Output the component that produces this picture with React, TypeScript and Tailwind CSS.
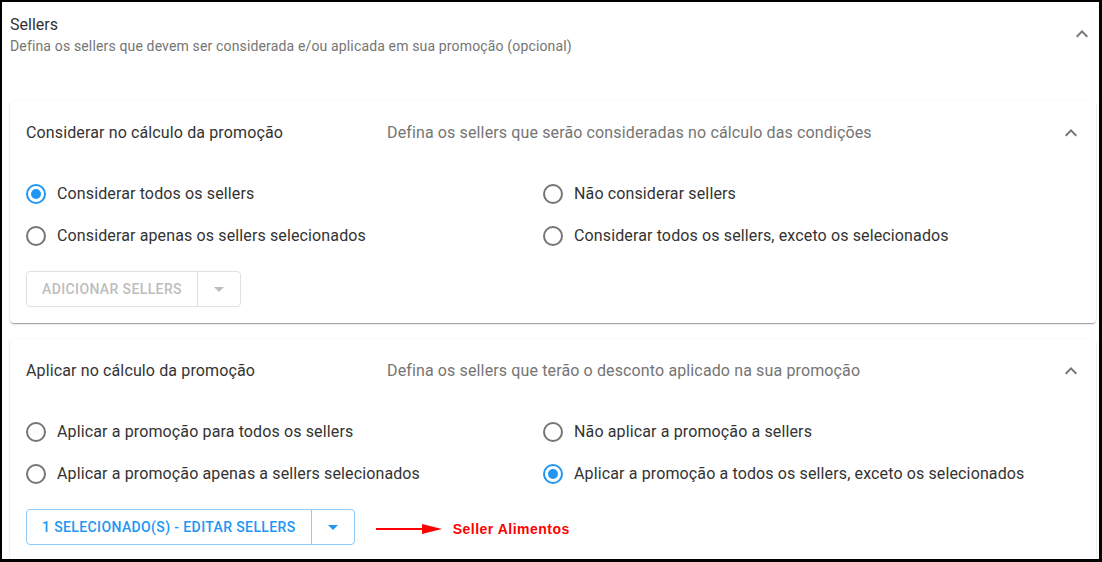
import React from "react";

const FONT = { fontFamily: "Roboto, 'Noto Sans', sans-serif" };

function ExpandLess({ className = "" }: { className?: string }) {
  return (
    <svg viewBox="0 0 24 24" className={className} fill="currentColor">
      <path d="M12 8l-6 6 1.41 1.41L12 10.83l4.59 4.58L18 14z" />
    </svg>
  );
}

function ArrowDropDown({ className = "" }: { className?: string }) {
  return (
    <svg viewBox="0 0 24 24" className={className} fill="currentColor">
      <path d="M7 10l5 5 5-5z" />
    </svg>
  );
}

function Radio({ checked, label }: { checked?: boolean; label: string }) {
  return (
    <label className="flex h-[42px] items-center gap-[11px]">
      <span
        className={
          "flex h-[20px] w-[20px] items-center justify-center rounded-full border-2 " +
          (checked ? "border-[#2196f3]" : "border-[#757575]")
        }
      >
        {checked && <span className="h-[10px] w-[10px] rounded-full bg-[#2196f3]" />}
      </span>
      <span className="text-[16px] tracking-[0.13px] text-[#333333]">{label}</span>
    </label>
  );
}

function SplitButton({ label, active }: { label: string; active?: boolean }) {
  const border = active ? "border-[#90caf9]" : "border-[#e0e0e0]";
  const text = active ? "text-[#2196f3]" : "text-[#bdbdbd]";
  return (
    <div className={`inline-flex h-[36px] rounded-[4px] border ${border}`}>
      <span
        className={`flex items-center px-[15px] text-[14px] font-medium uppercase tracking-[0.38px] ${text}`}
      >
        {label}
      </span>
      <span className={`flex w-[43px] items-center justify-center border-l ${border} ${text}`}>
        <ArrowDropDown className="h-[24px] w-[24px]" />
      </span>
    </div>
  );
}

function Panel({
  title,
  hint,
  options,
  button,
}: {
  title: string;
  hint: string;
  options: Array<{ label: string; checked?: boolean }>;
  button: React.ReactNode;
}) {
  return (
    <section className="rounded-[4px] bg-white px-[16px] pb-[16px] shadow-[0px_2px_1px_-1px_rgba(0,0,0,0.2),0px_1px_1px_0px_rgba(0,0,0,0.14),0px_1px_3px_0px_rgba(0,0,0,0.12)]">
      <header className="flex h-[64px] items-center">
        <span className="w-[361px] text-[16px] tracking-[0.13px] text-[#333333]">{title}</span>
        <span className="flex-1 text-[16px] tracking-[0.13px] text-[#757575]">{hint}</span>
        <ExpandLess className="mr-[-3px] h-[24px] w-[24px] text-[#757575]" />
      </header>
      <div className="grid grid-cols-[517px_1fr] pt-[8px]">
        {options.map((o) => (
          <Radio key={o.label} label={o.label} checked={o.checked} />
        ))}
      </div>
      <div className="mt-[14px]">{button}</div>
    </section>
  );
}

export default function App() {
  return (
    <div
      style={FONT}
      className="h-[562px] w-[1102px] overflow-hidden border-t-2 border-l-2 border-r-[3px] border-b-[3px] border-black bg-white"
    >
      <div className="pl-[8px] pr-[3px]">
        <div className="flex items-start pt-[13px]">
          <div className="flex-1">
            <div className="text-[16px] leading-[20px] text-[#333333]">Sellers</div>
            <div className="mt-[3px] text-[14px] leading-[17px] tracking-[0.15px] text-[#757575]">
              Defina os sellers que devem ser considerada e/ou aplicada em sua promoção (opcional)
            </div>
          </div>
          <ExpandLess className="mr-[2px] mt-[7px] h-[24px] w-[24px] text-[#757575]" />
        </div>

        <div className="mt-[46px] flex flex-col gap-[16px]">
          <Panel
            title="Considerar no cálculo da promoção"
            hint="Defina os sellers que serão consideradas no cálculo das condições"
            options={[
              { label: "Considerar todos os sellers", checked: true },
              { label: "Não considerar sellers" },
              { label: "Considerar apenas os sellers selecionados" },
              { label: "Considerar todos os sellers, exceto os selecionados" },
            ]}
            button={<SplitButton label="Adicionar Sellers" />}
          />
          <Panel
            title="Aplicar no cálculo da promoção"
            hint="Defina os sellers que terão o desconto aplicado na sua promoção"
            options={[
              { label: "Aplicar a promoção para todos os sellers" },
              { label: "Não aplicar a promoção a sellers" },
              { label: "Aplicar a promoção apenas a sellers selecionados" },
              { label: "Aplicar a promoção a todos os sellers, exceto os selecionados", checked: true },
            ]}
            button={
              <div className="flex items-center">
                <SplitButton label="1 Selecionado(s) - Editar Sellers" active />
                <div className="mt-[4px] flex items-center">
                  <svg width="66" height="12" viewBox="0 0 66 12" className="ml-[21px]">
                    <line x1="0" y1="6" x2="52" y2="6" stroke="#ff0000" strokeWidth="2" />
                    <polygon points="46,1 66,6 46,11" fill="#ff0000" />
                  </svg>
                  <span
                    className="ml-[11px] text-[14px] font-bold tracking-[0.5px] text-[#ff0000]"
                    style={{ fontFamily: "'Liberation Sans', Arial, sans-serif" }}
                  >
                    Seller Alimentos
                  </span>
                </div>
              </div>
            }
          />
        </div>
      </div>
    </div>
  );
}
